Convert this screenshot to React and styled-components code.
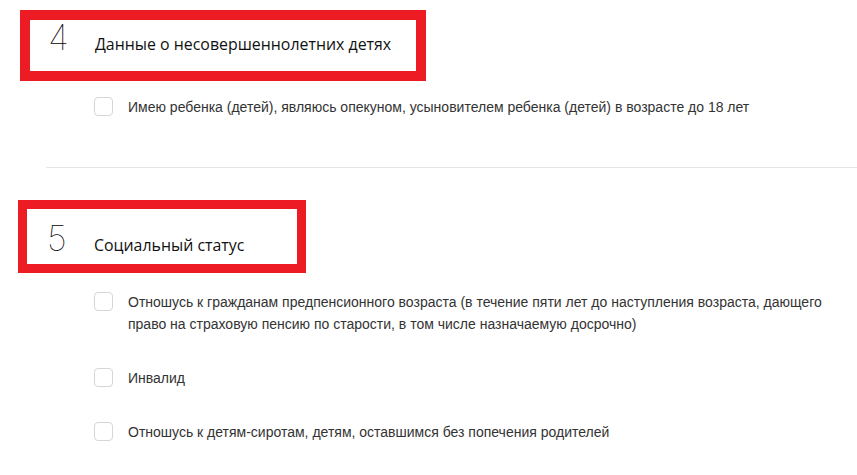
import React from "react";
import styled, { createGlobalStyle } from "styled-components";

const Global = createGlobalStyle`
  html, body { margin: 0; padding: 0; background: #fff; }
  body { font-family: "Liberation Sans", Arial, sans-serif; color: #333; }
`;

const Page = styled.div`
  width: 857px;
  height: 475px;
  overflow: hidden;
  padding-top: 10px;
  box-sizing: border-box;
`;

const Section = styled.section`
  display: flex;
  flex-direction: column;
  margin-top: ${(p) => p.$top || 0}px;
`;

const HeaderBox = styled.div`
  box-sizing: border-box;
  display: flex;
  align-items: baseline;
  margin-left: ${(p) => p.$left}px;
  width: ${(p) => p.$width}px;
  height: ${(p) => p.$height}px;
  border: ${(p) => p.$border}px solid #ed1c24;
  padding-left: ${(p) => p.$pad}px;
  padding-top: ${(p) => p.$top}px;
`;

const Num = styled.span`
  font-family: "Inter", "Open Sans", sans-serif;
  font-weight: 130;
  font-size: 35px;
  line-height: 30px;
  color: #000;
  width: 47px;
  flex: none;
`;

const Title = styled.h2`
  margin: 0;
  font-family: "Open Sans", sans-serif;
  font-weight: 400;
  font-size: 15.9px;
  line-height: 30px;
  color: #111;
`;

const List = styled.div`
  display: flex;
  flex-direction: column;
  gap: ${(p) => p.$gap}px;
  padding-left: 94px;
  margin-top: ${(p) => p.$top}px;
  padding-right: 20px;
`;

const Item = styled.label`
  display: flex;
  align-items: flex-start;
  gap: 15px;
  font-size: 14px;
  line-height: 22px;
  color: #333;
`;

const Box = styled.span`
  flex: none;
  box-sizing: border-box;
  width: 19px;
  height: 19px;
  margin-top: 1px;
  border: 1px solid #d6d6d6;
  border-radius: 4px;
  background: #fff;
`;

const Divider = styled.hr`
  border: 0;
  border-top: 1px solid #e4e4e4;
  margin: ${(p) => p.$top}px 0 0 46px;
`;

export default function App() {
  return (
    <Page>
      <Global />
      <Section>
        <HeaderBox $left={20} $width={406} $height={71} $border={10} $pad={18} $top={2}>
          <Num>4</Num>
          <Title>Данные о несовершеннолетних детях</Title>
        </HeaderBox>
        <List $top={15} $gap={0}>
          <Item>
            <Box />
            <span>Имею ребенка (детей), являюсь опекуном, усыновителем ребенка (детей) в возрасте до 18 лет</span>
          </Item>
        </List>
      </Section>
      <Divider $top={49} />
      <Section $top={32}>
        <HeaderBox $left={18} $width={288} $height={73} $border={9} $pad={20} $top={14}>
          <Num>5</Num>
          <Title>Социальный статус</Title>
        </HeaderBox>
        <List $top={18} $gap={32}>
          <Item>
            <Box />
            <span>
              Отношусь к гражданам предпенсионного возраста (в течение пяти лет до наступления возраста, дающего
              право на страховую пенсию по старости, в том числе назначаемую досрочно)
            </span>
          </Item>
          <Item>
            <Box />
            <span>Инвалид</span>
          </Item>
          <Item>
            <Box />
            <span>Отношусь к детям-сиротам, детям, оставшимся без попечения родителей</span>
          </Item>
        </List>
      </Section>
    </Page>
  );
}
